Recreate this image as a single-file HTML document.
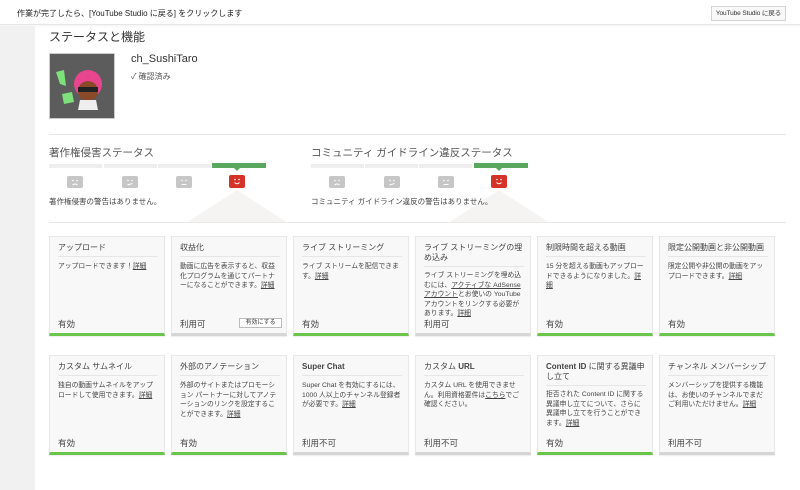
<!DOCTYPE html>
<html><head><meta charset="utf-8"><style>
*{margin:0;padding:0;box-sizing:border-box}
body{width:800px;height:490px;overflow:hidden;background:#fff;font-family:"Liberation Sans","Noto Sans CJK JP",sans-serif;color:#333;position:relative}
.top{position:absolute;left:0;top:0;width:800px;height:25px;background:#fff;border-bottom:1px solid #e6e6e6;box-shadow:0 1px 2px rgba(0,0,0,.05)}
.top .t{position:absolute;left:17px;top:8px;font-size:8px;color:#222}
.btn{position:absolute;left:711px;top:6px;width:75px;height:15px;border:1px solid #d3d3d3;background:#f8f8f8;font-size:6.5px;color:#333;text-align:center;line-height:13px;white-space:nowrap;letter-spacing:-.1px}
.side{position:absolute;left:0;top:26px;width:35px;height:464px;background:#f1f1f1}
.abs{position:absolute}
h1{position:absolute;left:49px;top:28px;font-size:12px;font-weight:normal;color:#333}
.av{left:49px;top:53px;width:66px;height:66px;background:#5c5c5c;border:1px solid #ccc;overflow:hidden}
.name{left:131px;top:53px;font-size:11px;color:#333}
.ver{left:131px;top:71px;font-size:8px;color:#555}
.hr{height:1px;background:#e8e8e8}
.sh{font-size:10.5px;color:#555}
.bar{height:4px;background:#eee}
.bar.g{background:#5aa85e;height:5px}
.ic{width:16px;height:12px;background:#c6c6c6;border-radius:2px}
.ic.r{background:#d53228}
.ic svg{display:block}
.st{font-size:7.5px;color:#444}
.card{position:absolute;width:116px;height:100px;background:#f8f8f8;border:1px solid #e8e8e8;box-shadow:0 1px 1px rgba(0,0,0,.08);border-bottom:3px solid #d5d5d5}
.card.g{border-bottom-color:#6ac64a}
.card .ti{position:absolute;left:8px;right:6px;top:6px;font-size:8px;color:#444;padding-bottom:3px;border-bottom:1px solid #e6e6e6;line-height:10px}
.card .ds{position:absolute;left:8px;right:6px;font-size:6.8px;color:#444;line-height:9.5px}
.card .s{position:absolute;left:8px;bottom:3px;font-size:8.5px;color:#444}
.card .b{position:absolute;right:4px;bottom:5px;width:43px;height:10px;border:1px solid #bbb;background:#fff;font-size:6px;text-align:center;line-height:8px;color:#333}
u{text-decoration:underline}
</style></head><body>
<div class="top"><div class="t">作業が完了したら、[YouTube Studio に戻る] をクリックします</div><div class="btn">YouTube Studio に戻る</div></div>
<div class="side"></div>
<h1>ステータスと機能</h1>
<div class="abs av"><svg width="66" height="66"><circle cx="38" cy="30" r="14" fill="#e8458f"/><circle cx="38" cy="37" r="10" fill="#8a4a2a"/><rect x="28" y="33" width="20" height="5" fill="#222"/><path d="M30 46 L46 46 L48 56 L28 56Z" fill="#eee"/><path d="M6 18 L14 16 L16 32 L10 30Z" fill="#7de07a"/><path d="M12 40 L22 38 L24 48 L14 50Z" fill="#7de07a"/></svg></div>
<div class="abs name">ch_SushiTaro</div>
<div class="abs ver">✓ 確認済み</div>
<div class="abs hr" style="left:49px;top:134px;width:737px"></div>
<svg class="abs" style="left:0;top:0" width="800" height="230"><polygon points="237,190 186,223 288,223" fill="#f6f3f3"/><polygon points="499,190 448,223 550,223" fill="#f6f3f3"/></svg>
<div class="abs sh" style="left:49px;top:145px">著作権侵害ステータス</div>
<div class="abs sh" style="left:311px;top:145px">コミュニティ ガイドライン違反ステータス</div>
<div class="abs bar" style="left:49px;top:164px;width:53px"></div>
<div class="abs bar" style="left:104px;top:164px;width:53px"></div>
<div class="abs bar" style="left:158px;top:164px;width:53px"></div>
<div class="abs bar g" style="left:212px;top:163px;width:54px"></div>
<div class="abs bar" style="left:311px;top:164px;width:53px"></div>
<div class="abs bar" style="left:365px;top:164px;width:53px"></div>
<div class="abs bar" style="left:419px;top:164px;width:53px"></div>
<div class="abs bar g" style="left:474px;top:163px;width:54px"></div>
<svg class="abs" style="left:0;top:167px" width="800" height="6"><polygon points="233,0 241,0 237,4" fill="#5aa85e"/><polygon points="495,0 503,0 499,4" fill="#5aa85e"/></svg>
<div class="abs ic" style="left:67px;top:176px"><svg width="16" height="12"><circle cx="6" cy="4.5" r=".8" fill="#fff"/><circle cx="10" cy="4.5" r=".8" fill="#fff"/><path d="M5.5 9 Q8 7 10.5 9" stroke="#fff" fill="none"/></svg></div>
<div class="abs ic" style="left:122px;top:176px"><svg width="16" height="12"><circle cx="6" cy="4.5" r=".8" fill="#fff"/><circle cx="10" cy="4.5" r=".8" fill="#fff"/><path d="M5.5 9 L10.5 7.5" stroke="#fff"/></svg></div>
<div class="abs ic" style="left:176px;top:176px"><svg width="16" height="12"><circle cx="6" cy="4.5" r=".8" fill="#fff"/><circle cx="10" cy="4.5" r=".8" fill="#fff"/><path d="M5.5 8.5 L10.5 8.5" stroke="#fff"/></svg></div>
<div class="abs ic r" style="left:229px;top:175px;height:13px"><svg width="16" height="13"><circle cx="6" cy="4.5" r=".8" fill="#fff"/><circle cx="10" cy="4.5" r=".8" fill="#fff"/><path d="M5.5 7.5 Q8 10 10.5 7.5" stroke="#fff" fill="none"/></svg></div>
<div class="abs ic" style="left:329px;top:176px"><svg width="16" height="12"><circle cx="6" cy="4.5" r=".8" fill="#fff"/><circle cx="10" cy="4.5" r=".8" fill="#fff"/><path d="M5.5 9 Q8 7 10.5 9" stroke="#fff" fill="none"/></svg></div>
<div class="abs ic" style="left:384px;top:176px"><svg width="16" height="12"><circle cx="6" cy="4.5" r=".8" fill="#fff"/><circle cx="10" cy="4.5" r=".8" fill="#fff"/><path d="M5.5 9 L10.5 7.5" stroke="#fff"/></svg></div>
<div class="abs ic" style="left:438px;top:176px"><svg width="16" height="12"><circle cx="6" cy="4.5" r=".8" fill="#fff"/><circle cx="10" cy="4.5" r=".8" fill="#fff"/><path d="M5.5 8.5 L10.5 8.5" stroke="#fff"/></svg></div>
<div class="abs ic r" style="left:491px;top:175px;height:13px"><svg width="16" height="13"><circle cx="6" cy="4.5" r=".8" fill="#fff"/><circle cx="10" cy="4.5" r=".8" fill="#fff"/><path d="M5.5 7.5 Q8 10 10.5 7.5" stroke="#fff" fill="none"/></svg></div>
<div class="abs st" style="left:49px;top:196px">著作権侵害の警告はありません。</div>
<div class="abs st" style="left:311px;top:196px">コミュニティ ガイドライン違反の警告はありません。</div>
<div class="abs hr" style="left:49px;top:222px;width:737px"></div>

<div class="card g" style="left:49px;top:236px"><div class="ti">アップロード</div><div class="ds" style="top:25px">アップロードできます！<u>詳細</u></div><div class="s">有効</div></div>
<div class="card" style="left:171px;top:236px"><div class="ti">収益化</div><div class="ds" style="top:25px">動画に広告を表示すると、収益化プログラムを通じてパートナーになることができます。<u>詳細</u></div><div class="s">利用可</div><div class="b">有効にする</div></div>
<div class="card g" style="left:293px;top:236px"><div class="ti">ライブ ストリーミング</div><div class="ds" style="top:25px">ライブ ストリームを配信できます。<u>詳細</u></div><div class="s">有効</div></div>
<div class="card" style="left:415px;top:236px"><div class="ti">ライブ ストリーミングの埋め込み</div><div class="ds" style="top:34px">ライブ ストリーミングを埋め込むには、<u>アクティブな AdSense アカウント</u>とお使いの YouTube アカウントをリンクする必要があります。<u>詳細</u></div><div class="s">利用可</div></div>
<div class="card g" style="left:537px;top:236px"><div class="ti">制限時間を超える動画</div><div class="ds" style="top:25px">15 分を超える動画もアップロードできるようになりました。<u>詳細</u></div><div class="s">有効</div></div>
<div class="card g" style="left:659px;top:236px"><div class="ti" style="white-space:nowrap">限定公開動画と非公開動画</div><div class="ds" style="top:25px">限定公開や非公開の動画をアップロードできます。<u>詳細</u></div><div class="s">有効</div></div>

<div class="card g" style="left:49px;top:355px"><div class="ti">カスタム サムネイル</div><div class="ds" style="top:25px">独自の動画サムネイルをアップロードして使用できます。<u>詳細</u></div><div class="s">有効</div></div>
<div class="card g" style="left:171px;top:355px"><div class="ti">外部のアノテーション</div><div class="ds" style="top:25px">外部のサイトまたはプロモーション パートナーに対してアノテーションのリンクを設定することができます。<u>詳細</u></div><div class="s">有効</div></div>
<div class="card" style="left:293px;top:355px"><div class="ti" style="font-weight:bold">Super Chat</div><div class="ds" style="top:25px">Super Chat を有効にするには、1000 人以上のチャンネル登録者が必要です。<u>詳細</u></div><div class="s">利用不可</div></div>
<div class="card" style="left:415px;top:355px"><div class="ti">カスタム <b>URL</b></div><div class="ds" style="top:25px">カスタム URL を使用できません。利用資格要件は<u>こちら</u>でご確認ください。</div><div class="s">利用不可</div></div>
<div class="card g" style="left:537px;top:355px"><div class="ti"><b>Content ID</b> に関する異議申し立て</div><div class="ds" style="top:34px">拒否された Content ID に関する異議申し立てについて、さらに異議申し立てを行うことができます。<u>詳細</u></div><div class="s">有効</div></div>
<div class="card" style="left:659px;top:355px"><div class="ti" style="white-space:nowrap">チャンネル メンバーシップ</div><div class="ds" style="top:25px">メンバーシップを提供する機能は、お使いのチャンネルでまだご利用いただけません。<u>詳細</u></div><div class="s">利用不可</div></div>
</body></html>
